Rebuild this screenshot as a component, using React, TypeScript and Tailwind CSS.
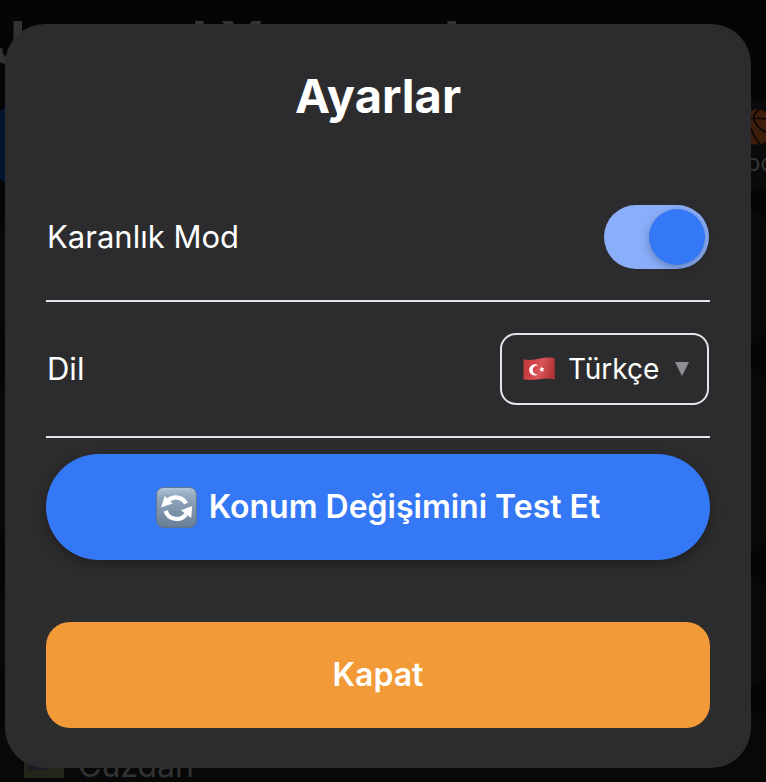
import { useState } from "react";

function FlagIcon() {
  return (
    <svg viewBox="0 0 32 24" className="h-6 w-8 shrink-0" aria-hidden="true">
      <defs>
        <linearGradient id="flag" x1="0" x2="1" y1="0" y2="0.15">
          <stop offset="0" stopColor="#b93a3a" />
          <stop offset="0.3" stopColor="#cf4143" />
          <stop offset="0.6" stopColor="#dc5558" />
          <stop offset="1" stopColor="#b33538" />
        </linearGradient>
      </defs>
      <path d="M0.5 2.2C6 3.4 11 3 16 1.8C21 0.6 27 0.1 31.7 1.3V22.4C27 21.2 21 21.5 16 22.2C11 23.2 5 23.2 0.5 22.6Z" fill="url(#flag)" />
      <path d="M15.3 8.6A5.6 5.6 0 1 0 15.3 17.3A4.5 4.5 0 1 1 15.3 8.6Z" fill="#fff" />
      <path d="M18.4 9.2L18 11.4L15.8 12L17.7 13.1L17.4 15.3L19 13.8L21 14.6L20.1 12.6L21.3 10.9L19.3 11.1Z" fill="#fff" />
    </svg>
  );
}

function RefreshIcon() {
  return (
    <svg viewBox="0 0 41 41" className="size-[41px] shrink-0" aria-hidden="true">
      <defs>
        <linearGradient id="tile" x1="0" x2="0" y1="0" y2="1">
          <stop offset="0" stopColor="#b4c7d9" />
          <stop offset="0.2" stopColor="#93a9c0" />
          <stop offset="1" stopColor="#667d95" />
        </linearGradient>
      </defs>
      <rect x="0.5" y="0.5" width="40" height="40" rx="7" fill="url(#tile)" stroke="#5c7591" />
      <path d="M12 13.5A11.6 11.6 0 0 1 30 16.4" fill="none" stroke="#fff" strokeWidth="4.2" />
      <path d="M8.8 9L5 20.4L16.6 16.6Z" fill="#fff" />
      <path d="M9.6 23.8A11.6 11.6 0 0 0 30 27.2" fill="none" stroke="#fff" strokeWidth="4.2" />
      <path d="M36.2 19L25 23.2L35.2 31Z" fill="#fff" />
    </svg>
  );
}

function BasketballIcon() {
  return (
    <svg viewBox="0 0 36 36" className="size-9" aria-hidden="true">
      <circle cx="18" cy="18" r="17.5" fill="#3b1d0a" />
      <g fill="none" stroke="#080503" strokeWidth="1.5">
        <path d="M20 1C10 7 16 17 25 22C30 25 33 26 34 26" />
        <path d="M1 12C10 9 24 8 35 12" />
        <path d="M9 11C12 21 15 29 21 35" />
      </g>
    </svg>
  );
}

function Backdrop() {
  return (
    <div aria-hidden="true" className="col-start-1 row-start-1 flex h-screen flex-col overflow-hidden bg-[#050505] text-[#333333]">
      <div className="-ml-2 h-[101px] shrink-0 pt-2 text-[58px] leading-[68px] font-bold whitespace-nowrap">Journal Yaşamak</div>
      <div className="-mr-9 -ml-4 flex h-[88px] shrink-0 justify-between">
        <div className="w-40 rounded-full bg-[#03142f]" />
        <div className="flex w-[90px] flex-col items-center rounded-2xl bg-[#0a0a0a] pt-2 text-2xl leading-9">
          <BasketballIcon />
          Spor
        </div>
      </div>
      <div className="mt-5 -mr-1 flex flex-1 flex-col gap-[22px]">
        <div className="h-[136px] rounded-3xl bg-[#080808]" />
        <div className="flex-1 rounded-3xl bg-[#080808]" />
        <div className="h-[113px] rounded-3xl bg-[#080808]" />
        <div className="flex h-[72px] items-end gap-3.5 rounded-t-3xl bg-[#080808] pl-6">
          <svg viewBox="0 0 40 40" className="mb-1 size-10">
            <rect width="40" height="40" fill="#24241a" />
            <rect x="4" y="28" width="20" height="4" fill="#1a1b20" />
          </svg>
          <span className="text-[32px] leading-8">Cüzdan</span>
        </div>
      </div>
    </div>
  );
}

export default function App() {
  const [dark, setDark] = useState(true);
  return (
    <div className="grid grid-cols-1 items-start font-[Inter,sans-serif]">
      <Backdrop />
      <div
        role="dialog"
        aria-labelledby="title"
        className="z-10 col-start-1 row-start-1 mt-6 mr-[15px] ml-[5px] flex flex-col rounded-[40px] bg-[#2c2c2e] px-[41px] pt-10 pb-10 text-white"
      >
        <h1 id="title" className="text-center text-[47px] leading-16 font-bold">Ayarlar</h1>

        <div className="mt-[46px] flex h-32 items-center justify-between border-b-2 border-[#e5e5ea] px-px">
          <label htmlFor="dark" className="text-[31px] leading-10">Karanlık Mod</label>
          <span className="grid h-16 w-[105px]">
            <input
              id="dark"
              type="checkbox"
              role="switch"
              checked={dark}
              onChange={(e) => setDark(e.target.checked)}
              className="peer col-start-1 row-start-1 h-16 w-[105px] cursor-pointer appearance-none rounded-full bg-[#636366] checked:bg-[#8aaefa]"
            />
            <span className="pointer-events-none col-start-1 row-start-1 m-1 size-14 rounded-full bg-[#3478f6] shadow-[0_3px_8px_rgba(0,0,0,0.25)] peer-checked:justify-self-end" />
          </span>
        </div>

        <div className="flex h-[136px] items-center justify-between border-b-2 border-[#e5e5ea] px-px">
          <label htmlFor="language" className="text-[31px] leading-10">Dil</label>
          <div className="grid h-[72px] w-[209px] items-center">
            <select
              id="language"
              defaultValue="tr"
              className="col-start-1 row-start-1 h-full w-full cursor-pointer appearance-none rounded-2xl border-2 border-[#e5e5ea] bg-transparent pr-10 pl-[66px] text-[28px] text-white"
            >
              <option value="tr">Türkçe</option>
            </select>
            <span className="pointer-events-none col-start-1 row-start-1 flex items-center justify-between pr-5 pl-[23px]">
              <FlagIcon />
              <svg viewBox="0 0 14 14" className="size-3.5" aria-hidden="true">
                <path d="M0 0H14L7 14Z" fill="#8e8e93" />
              </svg>
            </span>
          </div>
        </div>

        <button
          type="button"
          className="mt-4 flex h-[106px] items-center justify-center gap-3 rounded-full bg-[#3478f6] text-[32px] font-semibold shadow-[0_4px_12px_rgba(0,0,0,0.3)]"
        >
          <RefreshIcon />
          Konum Değişimini Test Et
        </button>
        <button type="button" className="mt-[62px] h-[106px] rounded-3xl bg-[#f19a37] text-[32px] font-semibold">
          Kapat
        </button>
      </div>
    </div>
  );
}
